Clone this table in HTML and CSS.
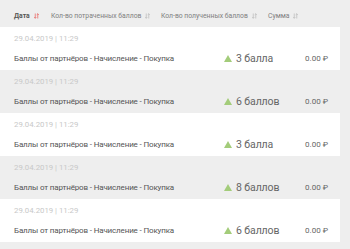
FILE: index.html
```html
<!DOCTYPE html>
<html lang="ru">
<head>
<meta charset="utf-8">
<link rel="stylesheet" href="styles.css">
</head>
<body>
<div class="table">
  <div class="head">
    <span class="th th-date active">Дата <svg class="sort" viewBox="0 0 6 7"><path d="M1.5 0.5V6.2M0.2 4.9L1.5 6.2L2.8 4.9M4.5 6.5V0.8M3.2 2.1L4.5 0.8L5.8 2.1"/></svg></span>
    <span class="th th-spent">Кол-во потраченных баллов <svg class="sort" viewBox="0 0 6 7"><path d="M1.5 0.5V6.2M0.2 4.9L1.5 6.2L2.8 4.9M4.5 6.5V0.8M3.2 2.1L4.5 0.8L5.8 2.1"/></svg></span>
    <span class="th th-got">Кол-во полученных баллов <svg class="sort" viewBox="0 0 6 7"><path d="M1.5 0.5V6.2M0.2 4.9L1.5 6.2L2.8 4.9M4.5 6.5V0.8M3.2 2.1L4.5 0.8L5.8 2.1"/></svg></span>
    <span class="th th-sum">Сумма <svg class="sort" viewBox="0 0 6 7"><path d="M1.5 0.5V6.2M0.2 4.9L1.5 6.2L2.8 4.9M4.5 6.5V0.8M3.2 2.1L4.5 0.8L5.8 2.1"/></svg></span>
  </div>
  <div class="row white">
    <div class="date">29.04.2019 | 11:29</div>
    <div class="line"><span class="desc">Баллы от партнёров - Начисление - Покупка</span><span class="pts"><i class="tri"></i>3 балла</span><span class="sum">0.00 ₽</span></div>
  </div>
  <div class="row">
    <div class="date">29.04.2019 | 11:29</div>
    <div class="line"><span class="desc">Баллы от партнёров - Начисление - Покупка</span><span class="pts"><i class="tri"></i>6 баллов</span><span class="sum">0.00 ₽</span></div>
  </div>
  <div class="row white">
    <div class="date">29.04.2019 | 11:29</div>
    <div class="line"><span class="desc">Баллы от партнёров - Начисление - Покупка</span><span class="pts"><i class="tri"></i>3 балла</span><span class="sum">0.00 ₽</span></div>
  </div>
  <div class="row">
    <div class="date">29.04.2019 | 11:29</div>
    <div class="line"><span class="desc">Баллы от партнёров - Начисление - Покупка</span><span class="pts"><i class="tri"></i>8 баллов</span><span class="sum">0.00 ₽</span></div>
  </div>
  <div class="row white">
    <div class="date">29.04.2019 | 11:29</div>
    <div class="line"><span class="desc">Баллы от партнёров - Начисление - Покупка</span><span class="pts"><i class="tri"></i>6 баллов</span><span class="sum">0.00 ₽</span></div>
  </div>
</div>
</body>
</html>
```

FILE: styles.css
```css
html, body {
  margin: 0;
  padding: 0;
  background: #eeeeee;
  font-family: Roboto, "Noto Sans", sans-serif;
  color: #555;
}
.table {
  width: 340px;
}
.head {
  height: 27px;
  display: flex;
  align-items: center;
  padding-left: 14px;
  padding-top: 5px;
  box-sizing: border-box;
  font-size: 6.8px;
  color: #808080;
}
.th {
  display: inline-flex;
  align-items: center;
  white-space: nowrap;
  flex: none;
}
.th-date { font-weight: 700; color: #555; width: 37px; }
.th-spent { width: 110px; }
.th-got { width: 107px; }
.sort {
  width: 5px;
  height: 6px;
  margin-left: 4px;
  fill: none;
  stroke: #b0b0b0;
  stroke-width: 0.7;
}
.active .sort { stroke: #e8413c; }
.row {
  height: 43px;
  padding-left: 14px;
  box-sizing: border-box;
  padding-top: 6px;
}
.white { background: #fff; }
.date {
  font-size: 7.8px;
  color: #c8c8c8;
  height: 12px;
  line-height: 12px;
}
.line {
  display: flex;
  align-items: center;
  height: 20px;
  margin-top: 3px;
}
.desc {
  font-size: 8px;
  color: #555;
  width: 210px;
  letter-spacing: -0.15px;
}
.pts {
  font-size: 10.5px;
  color: #666;
  width: 70px;
  display: inline-flex;
  align-items: center;
  letter-spacing: -0.1px;
}
.tri {
  width: 0;
  height: 0;
  border-left: 4px solid transparent;
  border-right: 4px solid transparent;
  border-bottom: 7px solid #a3cc7a;
  margin-right: 4px;
}
.sum {
  font-size: 8px;
  color: #666;
  width: 34px;
  text-align: right;
}
```
